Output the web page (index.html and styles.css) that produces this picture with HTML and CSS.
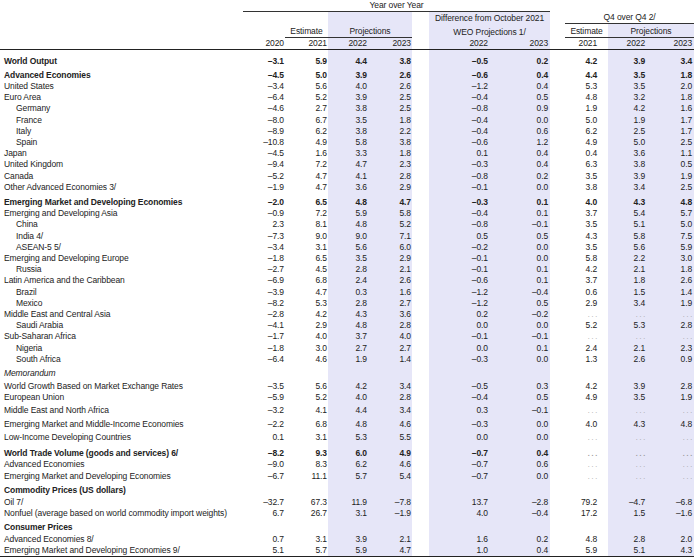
FILE: index.html
```html
<!DOCTYPE html>
<html lang="en">
<head>
<meta charset="utf-8">
<title>World Economic Outlook Projections</title>
<link rel="stylesheet" href="styles.css">
</head>
<body>
<table class="weo">
  <colgroup>
    <col class="c-label">
    <col class="c-a">
    <col class="c-b">
    <col class="c-c sh">
    <col class="c-d sh">
    <col class="c-s1">
    <col class="c-e sh">
    <col class="c-f sh">
    <col class="c-s2">
    <col class="c-g">
    <col class="c-h sh">
    <col class="c-i sh">
  </colgroup>
  <thead>
    <tr class="hA">
      <td></td>
      <td colspan="7" class="ctr white rule">Year over Year</td>
      <td colspan="4" class="white"></td>
    </tr>
    <tr class="hB">
      <td></td>
      <td class="white"></td>
      <td class="white"></td>
      <td></td>
      <td></td>
      <td></td>
      <td colspan="2" class="ctr">Difference from October 2021</td>
      <td></td>
      <td colspan="3" class="ctr white rule q4">Q4 over Q4 2/</td>
    </tr>
    <tr class="hC">
      <td></td>
      <td></td>
      <td class="ctr rule">Estimate</td>
      <td colspan="2" class="ctr rule">Projections</td>
      <td></td>
      <td colspan="2" class="ctr">WEO Projections 1/</td>
      <td></td>
      <td class="ctr rule">Estimate</td>
      <td colspan="2" class="ctr rule">Projections</td>
    </tr>
    <tr class="hD">
      <td></td>
      <td>2020</td>
      <td>2021</td>
      <td>2022</td>
      <td>2023</td>
      <td></td>
      <td>2022</td>
      <td>2023</td>
      <td></td>
      <td>2021</td>
      <td>2022</td>
      <td>2023</td>
    </tr>
  </thead>
  <tbody>
    <tr class="g55 b"><td class="l">World Output</td><td>–3.1</td><td>5.9</td><td>4.4</td><td>3.8</td><td></td><td>–0.5</td><td>0.2</td><td></td><td>4.2</td><td>3.9</td><td>3.4</td></tr>
    <tr class="g3 b"><td class="l">Advanced Economies</td><td>–4.5</td><td>5.0</td><td>3.9</td><td>2.6</td><td></td><td>–0.6</td><td>0.4</td><td></td><td>4.4</td><td>3.5</td><td>1.8</td></tr>
    <tr><td class="l">United States</td><td>–3.4</td><td>5.6</td><td>4.0</td><td>2.6</td><td></td><td>–1.2</td><td>0.4</td><td></td><td>5.3</td><td>3.5</td><td>2.0</td></tr>
    <tr><td class="l">Euro Area</td><td>–6.4</td><td>5.2</td><td>3.9</td><td>2.5</td><td></td><td>–0.4</td><td>0.5</td><td></td><td>4.8</td><td>3.2</td><td>1.8</td></tr>
    <tr><td class="l i">Germany</td><td>–4.6</td><td>2.7</td><td>3.8</td><td>2.5</td><td></td><td>–0.8</td><td>0.9</td><td></td><td>1.9</td><td>4.2</td><td>1.6</td></tr>
    <tr><td class="l i">France</td><td>–8.0</td><td>6.7</td><td>3.5</td><td>1.8</td><td></td><td>–0.4</td><td>0.0</td><td></td><td>5.0</td><td>1.9</td><td>1.7</td></tr>
    <tr><td class="l i">Italy</td><td>–8.9</td><td>6.2</td><td>3.8</td><td>2.2</td><td></td><td>–0.4</td><td>0.6</td><td></td><td>6.2</td><td>2.5</td><td>1.7</td></tr>
    <tr><td class="l i">Spain</td><td>–10.8</td><td>4.9</td><td>5.8</td><td>3.8</td><td></td><td>–0.6</td><td>1.2</td><td></td><td>4.9</td><td>5.0</td><td>2.5</td></tr>
    <tr><td class="l">Japan</td><td>–4.5</td><td>1.6</td><td>3.3</td><td>1.8</td><td></td><td>0.1</td><td>0.4</td><td></td><td>0.4</td><td>3.6</td><td>1.1</td></tr>
    <tr><td class="l">United Kingdom</td><td>–9.4</td><td>7.2</td><td>4.7</td><td>2.3</td><td></td><td>–0.3</td><td>0.4</td><td></td><td>6.3</td><td>3.8</td><td>0.5</td></tr>
    <tr><td class="l">Canada</td><td>–5.2</td><td>4.7</td><td>4.1</td><td>2.8</td><td></td><td>–0.8</td><td>0.2</td><td></td><td>3.5</td><td>3.9</td><td>1.9</td></tr>
    <tr><td class="l">Other Advanced Economies 3/</td><td>–1.9</td><td>4.7</td><td>3.6</td><td>2.9</td><td></td><td>–0.1</td><td>0.0</td><td></td><td>3.8</td><td>3.4</td><td>2.5</td></tr>
    <tr class="g4 b"><td class="l">Emerging Market and Developing Economies</td><td>–2.0</td><td>6.5</td><td>4.8</td><td>4.7</td><td></td><td>–0.3</td><td>0.1</td><td></td><td>4.0</td><td>4.3</td><td>4.8</td></tr>
    <tr><td class="l">Emerging and Developing Asia</td><td>–0.9</td><td>7.2</td><td>5.9</td><td>5.8</td><td></td><td>–0.4</td><td>0.1</td><td></td><td>3.7</td><td>5.4</td><td>5.7</td></tr>
    <tr><td class="l i">China</td><td>2.3</td><td>8.1</td><td>4.8</td><td>5.2</td><td></td><td>–0.8</td><td>–0.1</td><td></td><td>3.5</td><td>5.1</td><td>5.0</td></tr>
    <tr><td class="l i">India 4/</td><td>–7.3</td><td>9.0</td><td>9.0</td><td>7.1</td><td></td><td>0.5</td><td>0.5</td><td></td><td>4.3</td><td>5.8</td><td>7.5</td></tr>
    <tr><td class="l i">ASEAN-5 5/</td><td>–3.4</td><td>3.1</td><td>5.6</td><td>6.0</td><td></td><td>–0.2</td><td>0.0</td><td></td><td>3.5</td><td>5.6</td><td>5.9</td></tr>
    <tr><td class="l">Emerging and Developing Europe</td><td>–1.8</td><td>6.5</td><td>3.5</td><td>2.9</td><td></td><td>–0.1</td><td>0.0</td><td></td><td>5.8</td><td>2.2</td><td>3.0</td></tr>
    <tr><td class="l i">Russia</td><td>–2.7</td><td>4.5</td><td>2.8</td><td>2.1</td><td></td><td>–0.1</td><td>0.1</td><td></td><td>4.2</td><td>2.1</td><td>1.8</td></tr>
    <tr><td class="l">Latin America and the Caribbean</td><td>–6.9</td><td>6.8</td><td>2.4</td><td>2.6</td><td></td><td>–0.6</td><td>0.1</td><td></td><td>3.7</td><td>1.8</td><td>2.6</td></tr>
    <tr><td class="l i">Brazil</td><td>–3.9</td><td>4.7</td><td>0.3</td><td>1.6</td><td></td><td>–1.2</td><td>–0.4</td><td></td><td>0.6</td><td>1.5</td><td>1.4</td></tr>
    <tr><td class="l i">Mexico</td><td>–8.2</td><td>5.3</td><td>2.8</td><td>2.7</td><td></td><td>–1.2</td><td>0.5</td><td></td><td>2.9</td><td>3.4</td><td>1.9</td></tr>
    <tr><td class="l">Middle East and Central Asia</td><td>–2.8</td><td>4.2</td><td>4.3</td><td>3.6</td><td></td><td>0.2</td><td>–0.2</td><td></td><td class="na">. . .</td><td class="na">. . .</td><td class="na">. . .</td></tr>
    <tr><td class="l i">Saudi Arabia</td><td>–4.1</td><td>2.9</td><td>4.8</td><td>2.8</td><td></td><td>0.0</td><td>0.0</td><td></td><td>5.2</td><td>5.3</td><td>2.8</td></tr>
    <tr><td class="l">Sub-Saharan Africa</td><td>–1.7</td><td>4.0</td><td>3.7</td><td>4.0</td><td></td><td>–0.1</td><td>–0.1</td><td></td><td class="na">. . .</td><td class="na">. . .</td><td class="na">. . .</td></tr>
    <tr><td class="l i">Nigeria</td><td>–1.8</td><td>3.0</td><td>2.7</td><td>2.7</td><td></td><td>0.0</td><td>0.1</td><td></td><td>2.4</td><td>2.1</td><td>2.3</td></tr>
    <tr><td class="l i">South Africa</td><td>–6.4</td><td>4.6</td><td>1.9</td><td>1.4</td><td></td><td>–0.3</td><td>0.0</td><td></td><td>1.3</td><td>2.6</td><td>0.9</td></tr>
    <tr class="g3"><td class="l it">Memorandum</td><td></td><td></td><td></td><td></td><td></td><td></td><td></td><td></td><td></td><td></td><td></td></tr>
    <tr class="g2"><td class="l">World Growth Based on Market Exchange Rates</td><td>–3.5</td><td>5.6</td><td>4.2</td><td>3.4</td><td></td><td>–0.5</td><td>0.3</td><td></td><td>4.2</td><td>3.9</td><td>2.8</td></tr>
    <tr><td class="l">European Union</td><td>–5.9</td><td>5.2</td><td>4.0</td><td>2.8</td><td></td><td>–0.4</td><td>0.5</td><td></td><td>4.9</td><td>3.5</td><td>1.9</td></tr>
    <tr class="g1"><td class="l">Middle East and North Africa</td><td>–3.2</td><td>4.1</td><td>4.4</td><td>3.4</td><td></td><td>0.3</td><td>–0.1</td><td></td><td class="na">. . .</td><td class="na">. . .</td><td class="na">. . .</td></tr>
    <tr class="g3"><td class="l">Emerging Market and Middle-Income Economies</td><td>–2.2</td><td>6.8</td><td>4.8</td><td>4.6</td><td></td><td>–0.3</td><td>0.0</td><td></td><td>4.0</td><td>4.3</td><td>4.8</td></tr>
    <tr class="g2"><td class="l">Low-Income Developing Countries</td><td>0.1</td><td>3.1</td><td>5.3</td><td>5.5</td><td></td><td>0.0</td><td>0.0</td><td></td><td class="na">. . .</td><td class="na">. . .</td><td class="na">. . .</td></tr>
    <tr class="g5 b"><td class="l">World Trade Volume (goods and services) 6/</td><td>–8.2</td><td>9.3</td><td>6.0</td><td>4.9</td><td></td><td>–0.7</td><td>0.4</td><td></td><td class="na">. . .</td><td class="na">. . .</td><td class="na">. . .</td></tr>
    <tr><td class="l">Advanced Economies</td><td>–9.0</td><td>8.3</td><td>6.2</td><td>4.6</td><td></td><td>–0.7</td><td>0.6</td><td></td><td class="na">. . .</td><td class="na">. . .</td><td class="na">. . .</td></tr>
    <tr><td class="l">Emerging Market and Developing Economies</td><td>–6.7</td><td>11.1</td><td>5.7</td><td>5.4</td><td></td><td>–0.7</td><td>0.0</td><td></td><td class="na">. . .</td><td class="na">. . .</td><td class="na">. . .</td></tr>
    <tr class="g3"><td class="l bl">Commodity Prices (US dollars)</td><td></td><td></td><td></td><td></td><td></td><td></td><td></td><td></td><td></td><td></td><td></td></tr>
    <tr class="g1"><td class="l">Oil 7/</td><td>–32.7</td><td>67.3</td><td>11.9</td><td>–7.8</td><td></td><td>13.7</td><td>–2.8</td><td></td><td>79.2</td><td>–4.7</td><td>–6.8</td></tr>
    <tr><td class="l">Nonfuel (average based on world commodity import weights)</td><td>6.7</td><td>26.7</td><td>3.1</td><td>–1.9</td><td></td><td>4.0</td><td>–0.4</td><td></td><td>17.2</td><td>1.5</td><td>–1.6</td></tr>
    <tr class="g3"><td class="l bl">Consumer Prices</td><td></td><td></td><td></td><td></td><td></td><td></td><td></td><td></td><td></td><td></td><td></td></tr>
    <tr><td class="l">Advanced Economies 8/</td><td>0.7</td><td>3.1</td><td>3.9</td><td>2.1</td><td></td><td>1.6</td><td>0.2</td><td></td><td>4.8</td><td>2.8</td><td>2.0</td></tr>
    <tr class="last"><td class="l">Emerging Market and Developing Economies 9/</td><td>5.1</td><td>5.7</td><td>5.9</td><td>4.7</td><td></td><td>1.0</td><td>0.4</td><td></td><td>5.9</td><td>5.1</td><td>4.3</td></tr>
  </tbody>
</table>
<p class="note">Note: Real effective exchange rates are assumed to remain constant at the levels prevailing during December 10, 2021–January 7, 2022. Economies are listed on the basis of economic size. The aggregated quarterly data are seasonally adjusted.</p>
</body>
</html>
```

FILE: styles.css
```css
html, body {
  margin: 0;
  padding: 0;
  background: #ffffff;
}

body {
  font-family: "Liberation Sans", Arial, sans-serif;
  font-size: 8.5px;
  letter-spacing: -0.1px;
  color: #222222;
  width: 700px;
  overflow: hidden;
}

.weo {
  table-layout: fixed;
  border-collapse: separate;
  border-spacing: 0;
  width: 694px;
}

.weo td {
  padding: 0;
  line-height: 11.2px;
  white-space: nowrap;
  text-align: right;
  overflow: visible;
}

.c-label { width: 243px; }
.c-a { width: 42px; }
.c-b { width: 43px; }
.c-c { width: 41px; }
.c-d { width: 43px; }
.c-s1 { width: 17px; }
.c-e { width: 61px; }
.c-f { width: 60px; }
.c-s2 { width: 15px; }
.c-g { width: 43px; }
.c-h { width: 42px; }
.c-i { width: 44px; }

.sh { background: #e6e6f8; }

.weo td.white { background: #ffffff; }
.weo td.ctr { text-align: center; }
.weo td.rule { border-bottom: 1px solid #333333; }

/* header rows */
.hA td { line-height: 11px; }
.hB td { line-height: 11px; }
.hC td { line-height: 11px; height: 13px; vertical-align: bottom; }
.hD td { line-height: 11px; border-bottom: 1px solid #222222; }

.hD td:nth-child(2),
.hD td:nth-child(3),
.hD td:nth-child(5) { padding-right: 1px; }
.hD td:nth-child(4) { padding-right: 2px; }
.hD td:nth-child(7),
.hD td:nth-child(8) { padding-right: 2px; }
.hD td:nth-child(10) { padding-right: 11px; }
.hD td:nth-child(11) { padding-right: 5px; }
.hD td:nth-child(12) { padding-right: 2px; }

/* body numbers: right edges */
tbody td:nth-child(2),
tbody td:nth-child(3),
tbody td:nth-child(5) { padding-right: 1px; }
tbody td:nth-child(4) { padding-right: 2px; }
tbody td:nth-child(7),
tbody td:nth-child(8) { padding-right: 2px; }
tbody td:nth-child(10) { padding-right: 11px; }
tbody td:nth-child(11) { padding-right: 5px; }
tbody td:nth-child(12) { padding-right: 2px; }

.weo td.l {
  text-align: left;
  padding-left: 4px;
}
.weo td.l.i { padding-left: 16px; }
.weo td.it { font-style: italic; }
.weo td.bl { font-weight: bold; }
.b td { font-weight: bold; }

.weo td.na {
  color: #9a9a9a;
  font-size: 7px;
}

/* vertical group spacing */
.g1 td { padding-top: 1px; }
.g2 td { padding-top: 2px; }
.g3 td { padding-top: 3px; }
.g4 td { padding-top: 4px; }
.g5 td { padding-top: 5px; }
.g55 td { padding-top: 5.5px; }

.last td { border-bottom: 1px solid #222222; }

.note {
  margin: 0;
  padding: 1px 0 0 2px;
  line-height: 11px;
  width: 694px;
}
```
